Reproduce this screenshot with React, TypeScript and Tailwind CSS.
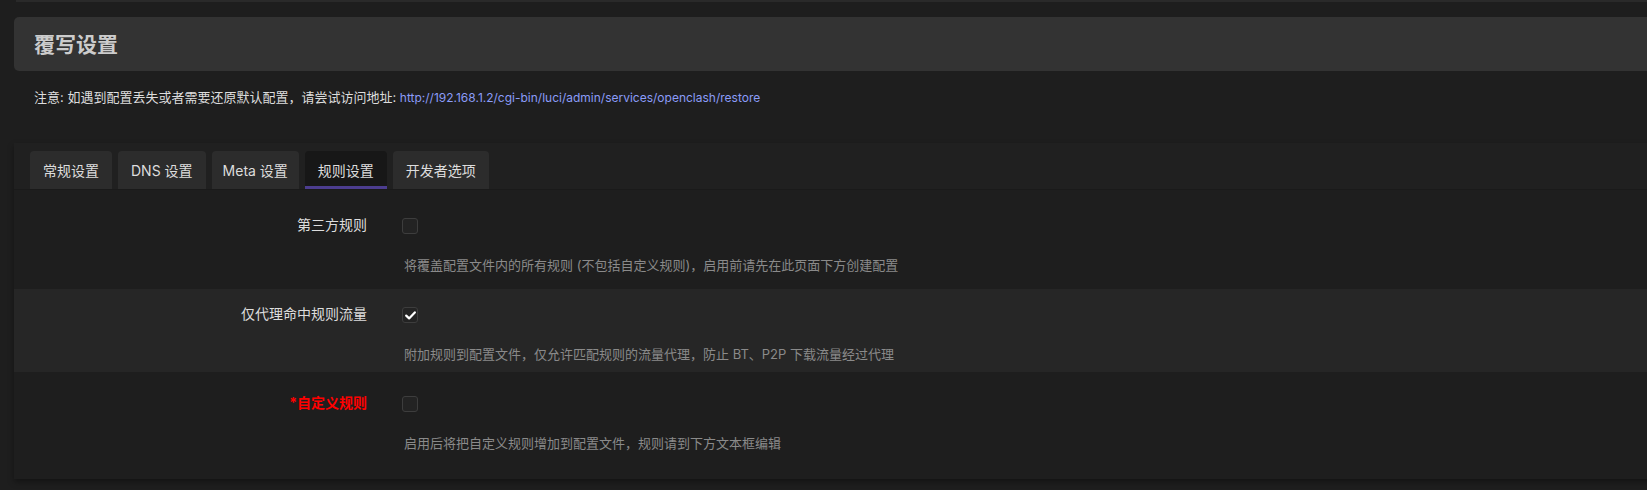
import React from 'react';

const Check = ({ checked }: { checked?: boolean }) => (
  <span className="flex h-[16px] w-[16px] items-center justify-center rounded-[3px] border border-[#3d3d3d] bg-[#232323]">
    {checked && (
      <svg width="11" height="9" viewBox="0 0 11 9" fill="none">
        <path d="M1.2 4.6 L4.1 7.4 L9.8 1.4" stroke="#ffffff" strokeWidth="2.2" strokeLinecap="round" strokeLinejoin="round" />
      </svg>
    )}
  </span>
);

const App: React.FC = () => {
  const tabs = ["常规设置", "DNS 设置", "Meta 设置", "规则设置", "开发者选项"];

  const rows = [
    {
      label: "第三方规则",
      desc: "将覆盖配置文件内的所有规则 (不包括自定义规则)，启用前请先在此页面下方创建配置",
      checked: false,
      red: false,
      cls: "pt-[25px] pb-[15px]",
    },
    {
      label: "仅代理命中规则流量",
      desc: "附加规则到配置文件，仅允许匹配规则的流量代理，防止 BT、P2P 下载流量经过代理",
      checked: true,
      red: false,
      cls: "pt-[15px] pb-[9px] bg-[#262626]",
    },
    {
      label: "*自定义规则",
      desc: "启用后将把自定义规则增加到配置文件，规则请到下方文本框编辑",
      checked: false,
      red: true,
      cls: "pt-[21px] pb-[27px]",
    },
  ];

  return (
    <div
      className="min-h-[490px] w-full overflow-hidden bg-[#1e1e1e] text-[#dddddd]"
      style={{ fontFamily: 'Inter, "Noto Sans CJK SC", sans-serif' }}
    >
      {/* top strip */}
      <div className="ml-4 h-[2px] bg-[#2a2a2a]"></div>

      {/* page header */}
      <div className="mt-[15px] ml-[14px] -mr-4 flex h-[54px] items-center rounded-l-[5px] bg-[#333333] pl-[20px]">
        <h2 className="text-[21px] font-bold leading-none text-[#cccccc]">覆写设置</h2>
      </div>

      <p className="mt-[17px] ml-[34px] text-[13px] leading-[18px] text-[#dddddd]">
        注意: 如遇到配置丢失或者需要还原默认配置，请尝试访问地址:{" "}
        <a className="text-[12px] text-[#8b9cf8]">http://192.168.1.2/cgi-bin/luci/admin/services/openclash/restore</a>
      </p>

      {/* settings card */}
      <div className="mt-[36px] ml-[14px] -mr-4 bg-[#202020] shadow-[0_3px_6px_rgba(0,0,0,0.35)]">
        <div className="flex gap-[6px] pt-[8px] pl-[16px]">
          {tabs.map((t, idx) => (
            <div
              key={idx}
              className={
                idx === 3
                  ? "flex h-[38px] items-center rounded-t-[4px] border-b-[3px] border-[#4c3d8f] bg-[#171717] px-[13px] pt-[3px] text-[14px] text-[#dddddd]"
                  : idx === 2
                  ? "flex h-[38px] items-center rounded-t-[4px] bg-[#2c2c2c] px-[11px] text-[14px] text-[#dddddd]"
                  : "flex h-[38px] items-center rounded-t-[4px] bg-[#2c2c2c] px-[13px] text-[14px] text-[#dddddd]"
              }
            >
              {t}
            </div>
          ))}
        </div>

        <div className="border-t border-[#1a1a1a] bg-[#1e1e1e]">
          {rows.map((row, idx) => (
            <div key={idx} className={"flex " + row.cls}>
              <div
                className={
                  row.red
                    ? "w-[353px] shrink-0 text-right text-[14px] font-bold leading-[20px] text-[#ff0000]"
                    : "w-[353px] shrink-0 text-right text-[14px] leading-[20px] text-[#dddddd]"
                }
              >
                {row.label}
              </div>
              <div className="ml-[35px] flex flex-col">
                <div className="mt-[3px]">
                  <Check checked={row.checked} />
                </div>
                <p className="mt-[22px] ml-[2px] text-[13px] leading-[18px] text-[#8a8a8a]">{row.desc}</p>
              </div>
            </div>
          ))}
        </div>
      </div>
    </div>
  );
};

export default App;
